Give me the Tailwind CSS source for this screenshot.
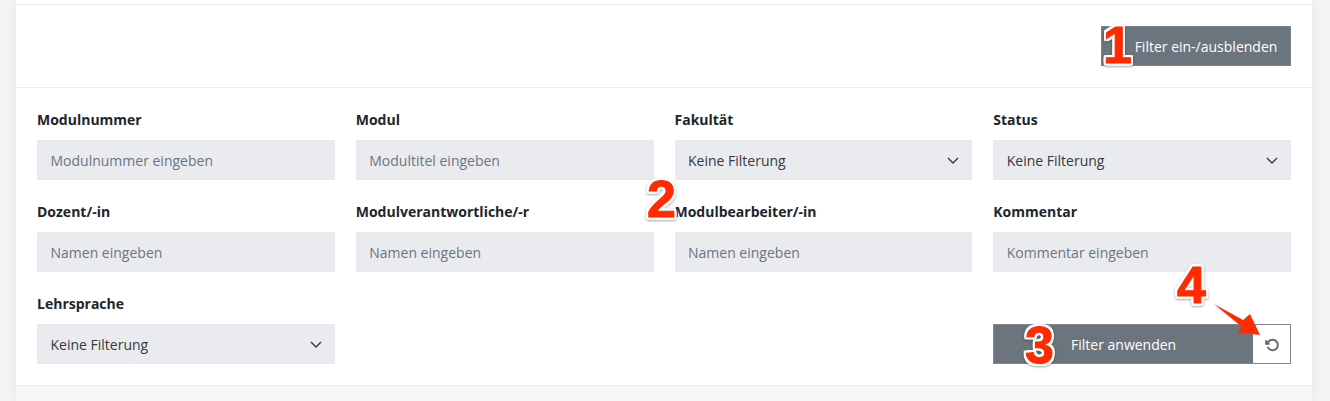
<!DOCTYPE html>
<html lang="de">
<head>
<meta charset="utf-8">
<title>Filter</title>
<script src="https://cdn.jsdelivr.net/npm/@tailwindcss/browser@4"></script>
</head>
<body class="m-0 bg-[#f5f5f5] font-['Open_Sans',sans-serif]">
<div class="relative h-[401px] w-[1330px] overflow-hidden">
  <div class="ml-[16px] w-[1296px] h-[401px] bg-[#f7f7f7] shadow-[0_0_16px_rgba(0,0,0,0.07)]">
  <div class="bg-white h-[386px] border-b border-[#ebebeb]">
    <div class="h-[88px] border-b border-[#ececec] pt-[4px]">
      <div class="h-[83px] border-t border-[#e9ebef] pt-[21px] pr-[21px] flex justify-end">
        <button class="w-[190px] h-[40px] bg-[#6c757d] text-white text-[14px] pl-[20px] border border-[#7a828a]">Filter ein-/ausblenden</button>
      </div>
    </div>
    <div class="grid grid-cols-4 gap-x-[21px] px-[21px] pt-[21px]">
      <div class="h-[92px]"><div class="h-[31px] pt-[1px] text-[14px] leading-[20px] font-bold text-[#212529]">Modulnummer</div><div class="h-[40px] bg-[#eaebef] flex items-center px-[13.5px] text-[14px] text-[#6c757d]">Modulnummer eingeben</div></div>
      <div class="h-[92px]"><div class="h-[31px] pt-[1px] text-[14px] leading-[20px] font-bold text-[#212529]">Modul</div><div class="h-[40px] bg-[#eaebef] flex items-center px-[13.5px] text-[14px] text-[#6c757d]">Modultitel eingeben</div></div>
      <div class="h-[92px]"><div class="h-[31px] pt-[1px] text-[14px] leading-[20px] font-bold text-[#212529]">Fakultät</div><div class="h-[40px] bg-[#eaebef] flex items-center justify-between pl-[13.5px] pr-[13px] text-[14px] text-[#343a40]">Keine Filterung<svg width="12" height="7" viewBox="0 0 12 7" fill="none" stroke="#343a40" stroke-width="1.4"><path d="M1 1l5 5 5-5"/></svg></div></div>
      <div class="h-[92px]"><div class="h-[31px] pt-[1px] text-[14px] leading-[20px] font-bold text-[#212529]">Status</div><div class="h-[40px] bg-[#eaebef] flex items-center justify-between pl-[13.5px] pr-[13px] text-[14px] text-[#343a40]">Keine Filterung<svg width="12" height="7" viewBox="0 0 12 7" fill="none" stroke="#343a40" stroke-width="1.4"><path d="M1 1l5 5 5-5"/></svg></div></div>

      <div class="h-[92px]"><div class="h-[31px] pt-[1px] text-[14px] leading-[20px] font-bold text-[#212529]">Dozent/-in</div><div class="h-[40px] bg-[#eaebef] flex items-center px-[13.5px] text-[14px] text-[#6c757d]">Namen eingeben</div></div>
      <div class="h-[92px]"><div class="h-[31px] pt-[1px] text-[14px] leading-[20px] font-bold text-[#212529]">Modulverantwortliche/-r</div><div class="h-[40px] bg-[#eaebef] flex items-center px-[13.5px] text-[14px] text-[#6c757d]">Namen eingeben</div></div>
      <div class="h-[92px]"><div class="h-[31px] pt-[1px] text-[14px] leading-[20px] font-bold text-[#212529]">Modulbearbeiter/-in</div><div class="h-[40px] bg-[#eaebef] flex items-center px-[13.5px] text-[14px] text-[#6c757d]">Namen eingeben</div></div>
      <div class="h-[92px]"><div class="h-[31px] pt-[1px] text-[14px] leading-[20px] font-bold text-[#212529]">Kommentar</div><div class="h-[40px] bg-[#eaebef] flex items-center px-[13.5px] text-[14px] text-[#6c757d]">Kommentar eingeben</div></div>

      <div><div class="h-[31px] pt-[1px] text-[14px] leading-[20px] font-bold text-[#212529]">Lehrsprache</div><div class="h-[40px] bg-[#eaebef] flex items-center justify-between pl-[13.5px] pr-[13px] text-[14px] text-[#343a40]">Keine Filterung<svg width="12" height="7" viewBox="0 0 12 7" fill="none" stroke="#343a40" stroke-width="1.4"><path d="M1 1l5 5 5-5"/></svg></div></div>
      <div></div><div></div>
      <div class="pt-[31px]">
        <div class="flex h-[40px] border border-[#7f868d]">
          <button class="flex-1 bg-[#6c757d] text-white text-[14px]">Filter anwenden</button>
          <button class="w-[37px] bg-white flex items-center justify-center"><svg class="mt-[1px]" width="14" height="14" viewBox="0 0 24 24" fill="none" stroke="#666c72" stroke-width="3.4"><polyline points="2 4 2 10 8 10"/><path d="M4.5 15a9 9 0 1 0 2.13-9.36L2 10"/></svg></button>
        </div>
      </div>
    </div>
  </div>
  </div>

  <span class="absolute left-[1103px] top-[15px] text-[52px] leading-[60px] font-bold font-['Liberation_Sans',sans-serif] text-[#ff2a00] [-webkit-text-stroke:1px_#ff2a00] [filter:drop-shadow(2px_0_0_white)_drop-shadow(-2px_0_0_white)_drop-shadow(0_2px_0_white)_drop-shadow(0_-2px_0_white)_drop-shadow(0_1px_1px_rgba(0,0,0,0.35))]">1</span>
  <span class="absolute left-[647px] top-[169px] text-[52px] leading-[60px] font-bold font-['Liberation_Sans',sans-serif] text-[#ff2a00] [-webkit-text-stroke:1px_#ff2a00] [filter:drop-shadow(2px_0_0_white)_drop-shadow(-2px_0_0_white)_drop-shadow(0_2px_0_white)_drop-shadow(0_-2px_0_white)_drop-shadow(0_1px_1px_rgba(0,0,0,0.35))]">2</span>
  <span class="absolute left-[1025px] top-[315px] text-[52px] leading-[60px] font-bold font-['Liberation_Sans',sans-serif] text-[#ff2a00] [-webkit-text-stroke:1px_#ff2a00] [filter:drop-shadow(2px_0_0_white)_drop-shadow(-2px_0_0_white)_drop-shadow(0_2px_0_white)_drop-shadow(0_-2px_0_white)_drop-shadow(0_1px_1px_rgba(0,0,0,0.35))]">3</span>
  <span class="absolute left-[1177px] top-[255px] text-[52px] leading-[60px] font-bold font-['Liberation_Sans',sans-serif] text-[#ff2a00] [-webkit-text-stroke:1px_#ff2a00] [filter:drop-shadow(2px_0_0_white)_drop-shadow(-2px_0_0_white)_drop-shadow(0_2px_0_white)_drop-shadow(0_-2px_0_white)_drop-shadow(0_1px_1px_rgba(0,0,0,0.35))]">4</span>
  <svg class="absolute left-[1210px] top-[300px]" width="52" height="40" viewBox="0 0 52 40"><path d="M4 4L33 20L40 14L50 35L27 32L32 27Z" fill="#ff2a00"/></svg>
</div>
</body>
</html>
